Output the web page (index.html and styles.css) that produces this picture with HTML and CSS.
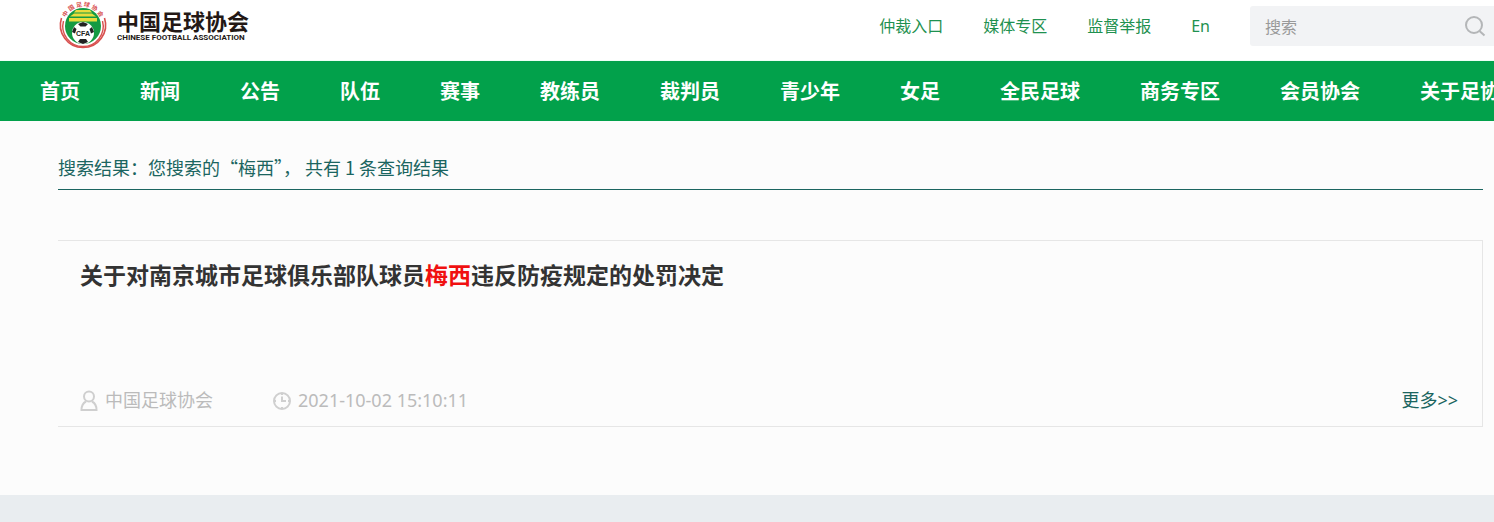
FILE: index.html
```html
<!DOCTYPE html>
<html lang="zh-CN">
<head>
    <meta charset="UTF-8">
    <meta name="viewport" content="width=device-width, initial-scale=1.0">
    <title>中国足球协会</title>
    <link rel="stylesheet" href="styles.css">
</head>
<body>
    <header class="header">
        <a class="logo" href="#">
            <svg class="logo-badge" viewBox="0 0 48 48" aria-hidden="true">
                <defs>
                    <path id="badgeArc" d="M5.8 29 A18.8 18.8 0 1 1 42.200 29"/>
                </defs>
                <path d="M2.500 17 A22.600 22.600 0 1 0 45.500 17" fill="none" stroke="#d8504f" stroke-width="1.600"/>
                <path d="M4.500 20 A20.200 20.200 0 1 0 43.500 20" fill="none" stroke="#d8504f" stroke-width="1.400"/>
                <circle cx="24" cy="25" r="18" fill="#149a42"/>
                <text class="badge-ring" fill="#d8504f"><textPath href="#badgeArc" startOffset="50%" text-anchor="middle">中 国 足 球 协 会</textPath></text>
                <path d="M17 9h14l2 2.500H15z M15 12.500h18l4 3H11z M10 17h28v3.500H10z" fill="#e8dc3c"/>
                <circle cx="24" cy="32" r="11" fill="#fff"/>
                <path d="M19 23l5-2 5 2-2.500 2.500h-5z M13 31l2-5 2.500 2-1.500 4.500z M35 31l-2-5-2.500 2 1.500 4.500z M21 38h6l2 3-5 2-5-2z" fill="#222"/>
                <text class="badge-cfa" x="24" y="35" text-anchor="middle" fill="#222">CFA</text>
            </svg>
            <span class="logo-text">
                <span class="logo-cn">中国足球协会</span>
                <span class="logo-en">CHINESE FOOTBALL ASSOCIATION</span>
            </span>
        </a>
        <div class="header-right">
            <div class="top-links">
                <a href="#">仲裁入口</a>
                <a href="#">媒体专区</a>
                <a href="#">监督举报</a>
                <a href="#">En</a>
            </div>
            <form class="search">
                <input type="text" placeholder="搜索" aria-label="搜索">
                <button type="submit" aria-label="搜索">
                    <svg viewBox="0 0 22 22" width="22" height="22" fill="none" stroke="#b4b6b8" stroke-width="2">
                        <circle cx="10" cy="10" r="8"/>
                        <path d="M15.500 16l5 4.500"/>
                    </svg>
                </button>
            </form>
        </div>
    </header>

    <nav class="nav">
        <a href="#">首页</a>
        <a href="#">新闻</a>
        <a href="#">公告</a>
        <a href="#">队伍</a>
        <a href="#">赛事</a>
        <a href="#">教练员</a>
        <a href="#">裁判员</a>
        <a href="#">青少年</a>
        <a href="#">女足</a>
        <a href="#">全民足球</a>
        <a href="#">商务专区</a>
        <a href="#">会员协会</a>
        <a href="#">关于足协</a>
    </nav>

    <main class="main">
        <p class="result-info">搜索结果：您搜索的“梅西”， 共有 1 条查询结果</p>

        <article class="result">
            <h2><a href="#">关于对南京城市足球俱乐部队球员<em>梅西</em>违反防疫规定的处罚决定</a></h2>
            <div class="result-meta">
                <span class="author">
                    <svg viewBox="0 0 20 22" width="20" height="22" fill="none" stroke="#cfcfcf" stroke-width="2">
                        <circle cx="9" cy="6.500" r="5"/>
                        <path d="M6 11.500C3 13 1.500 16 1.500 20h15c0-4-1.500-7-4.500-8.500"/>
                    </svg>
                    中国足球协会
                </span>
                <time class="date">
                    <svg viewBox="0 0 20 22" width="20" height="22" fill="none" stroke="#cfcfcf" stroke-width="2">
                        <circle cx="9" cy="11" r="8"/>
                        <path d="M9 6.500v4.500h4M9 3v2M9 17v2M1 11h2M15 11h2"/>
                    </svg>
                    2021-10-02 15:10:11
                </time>
                <a class="more" href="#">更多&gt;&gt;</a>
            </div>
        </article>
    </main>

    <footer class="footer"></footer>
</body>
</html>
```
FILE: styles.css
```css
* {
    margin: 0;
    padding: 0;
    box-sizing: border-box;
}

body {
    display: flex;
    flex-direction: column;
    min-height: 100vh;
    font-family: "Noto Sans", "Noto Sans CJK SC", sans-serif;
    background: #fcfcfc;
    overflow-x: hidden;
}

a {
    color: inherit;
    text-decoration: none;
}

.header {
    display: flex;
    justify-content: space-between;
    padding-left: 59px;
    background: #fff;
    border-bottom: 1px solid #eefff6;
}

.logo {
    display: flex;
    gap: 10px;
    padding: 1px 0 11px;
}

.logo-badge {
    width: 48px;
    height: 48px;
    overflow: visible;
}

.badge-ring {
    font: bold 6px "Noto Sans CJK SC", sans-serif;
}

.badge-cfa {
    font: bold 7px "Liberation Sans", sans-serif;
}

.logo-text {
    display: flex;
    flex-direction: column;
    gap: 1px;
    padding-top: 7px;
    color: #231815;
    white-space: nowrap;
}

.logo-cn {
    font: bold 22px/24px "Noto Sans CJK SC", sans-serif;
}

.logo-en {
    font: bold 8px/10px Roboto, sans-serif;
}

.header-right {
    display: flex;
    align-items: flex-start;
    gap: 40px;
    padding-top: 6px;
}

.top-links {
    display: flex;
    gap: 40px;
    color: #1f9150;
    font-size: 16px;
    line-height: 40px;
    white-space: nowrap;
}

.search {
    display: flex;
    align-items: center;
    width: 244px;
    height: 40px;
    padding: 0 8px 0 15px;
    background: #f2f3f5;
    border-radius: 3px 0 0 3px;
}

.search input {
    flex: 1;
    min-width: 0;
    border: none;
    outline: none;
    background: none;
    font: 16px "Noto Sans CJK SC", sans-serif;
}

.search input::placeholder {
    color: #999;
}

.search button {
    display: flex;
    border: none;
    background: none;
    cursor: pointer;
}

.nav {
    display: flex;
    gap: 60px;
    padding: 1px 0 0 40px;
    overflow: hidden;
    background: #02a14b;
    color: #fff;
    font-size: 20px;
    font-weight: bold;
    line-height: 59px;
    white-space: nowrap;
}

.nav a {
    flex-shrink: 0;
}

.main {
    padding: 32px 11px 68px 58px;
}

.result-info {
    padding-bottom: 8px;
    margin-bottom: 50px;
    border-bottom: 1px solid #1b6560;
    color: #1b6560;
    font: 18px/28px "Noto Sans CJK SC", sans-serif;
}

.result {
    padding: 18px 24px 10px 22px;
    border: 1px solid #e6e6e6;
    border-left: none;
}

.result h2 {
    margin-bottom: 94px;
    color: #333;
    font-size: 23px;
    line-height: 32px;
}

.result em {
    color: #f01010;
    font-style: normal;
}

.result-meta {
    display: flex;
    gap: 60px;
    color: #bbb;
    font-size: 18px;
    line-height: 31px;
}

.author,
.date {
    display: flex;
    align-items: center;
    gap: 5px;
}

.more {
    margin-left: auto;
    color: #1b6560;
}

.footer {
    flex: 1;
    background: #e9edf0;
}
```
